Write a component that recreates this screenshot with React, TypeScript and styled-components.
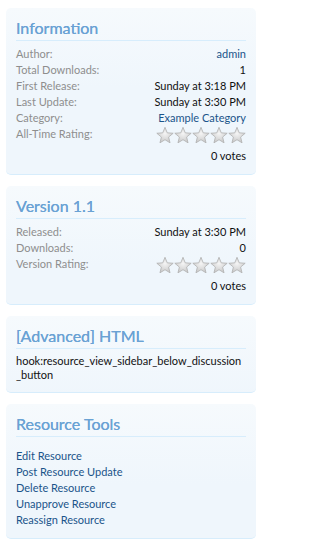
import React from "react";
import styled, { createGlobalStyle } from "styled-components";

const GlobalStyle = createGlobalStyle`
  body {
    margin: 0;
    background: #fff;
    font-family: Lato, "Open Sans", sans-serif;
    font-size: 11px;
    -webkit-font-smoothing: antialiased;
  }
`;

const Sidebar = styled.div`
  width: 250px;
  padding: 8px 0 0 6px;
  display: flex;
  flex-direction: column;
  gap: 11px;
`;

const Panel = styled.div`
  background: linear-gradient(to bottom, #f6fafd 0px, #eff6fc 80px);
  border-bottom: 1px solid #d7edfc;
  border-radius: 5px;
  padding: 10px;
`;

const Heading = styled.h3`
  margin: 0 0 5px;
  padding-bottom: 2px;
  border-bottom: 1px solid #d7edfc;
  font-size: 16px;
  line-height: 20px;
  font-weight: normal;
  color: #6aa2d4;
  text-shadow: 0 0 0.3px #6aa2d4;
`;

const Pairs = styled.dl`
  margin: 0;
`;

const Pair = styled.div<{ $tall?: boolean }>`
  display: flex;
  justify-content: space-between;
  align-items: flex-start;
  height: ${(p) => (p.$tall ? 22 : 16)}px;
  line-height: 16px;
`;

const Label = styled.dt`
  color: #8e8e8e;
`;

const Value = styled.dd<{ $link?: boolean }>`
  margin: 0;
  color: ${(p) => (p.$link ? "#1a548a" : "#111")};
  text-align: right;
`;

const Votes = styled.div`
  text-align: right;
  line-height: 16px;
  color: #111;
`;

const Stars = styled.div`
  display: flex;
  margin-top: 1px;
`;

const Hook = styled.div`
  line-height: 14px;
  color: #111;
`;

const ToolList = styled.ul`
  list-style: none;
  margin: 11px 0 0;
  padding: 0;
`;

const ToolLink = styled.li`
  line-height: 16px;
  color: #1a548a;
`;

const starPoints = Array.from({ length: 10 }, (_, i) => {
  const a = ((-90 + i * 36) * Math.PI) / 180;
  const r = i % 2 === 0 ? 8.6 : 3.8;
  return `${(9 + r * Math.cos(a)).toFixed(2)},${(8.9 + r * Math.sin(a)).toFixed(2)}`;
}).join(" ");

const Star = () => (
  <svg width="18" height="16" viewBox="0 0 18 16">
    <defs>
      <radialGradient id="starFill" cx="50%" cy="40%" r="65%">
        <stop offset="0%" stopColor="#f5f5f5" />
        <stop offset="100%" stopColor="#c4c4c4" />
      </radialGradient>
    </defs>
    <polygon points={starPoints} fill="url(#starFill)" stroke="#b0b0b0" strokeWidth="0.8" strokeLinejoin="round" />
  </svg>
);

const Rating = ({ label }: { label: string }) => (
  <>
    <Pair $tall>
      <Label>{label}</Label>
      <Stars>
        {[0, 1, 2, 3, 4].map((i) => (
          <Star key={i} />
        ))}
      </Stars>
    </Pair>
    <Votes>0 votes</Votes>
  </>
);

const tools = [
  "Edit Resource",
  "Post Resource Update",
  "Delete Resource",
  "Unapprove Resource",
  "Reassign Resource",
];

function App() {
  return (
    <Sidebar>
      <GlobalStyle />
      <Panel>
        <Heading>Information</Heading>
        <Pairs>
          <Pair>
            <Label>Author:</Label>
            <Value $link>admin</Value>
          </Pair>
          <Pair>
            <Label>Total Downloads:</Label>
            <Value>1</Value>
          </Pair>
          <Pair>
            <Label>First Release:</Label>
            <Value>Sunday at 3:18 PM</Value>
          </Pair>
          <Pair>
            <Label>Last Update:</Label>
            <Value>Sunday at 3:30 PM</Value>
          </Pair>
          <Pair>
            <Label>Category:</Label>
            <Value $link>Example Category</Value>
          </Pair>
          <Rating label="All-Time Rating:" />
        </Pairs>
      </Panel>
      <Panel>
        <Heading>Version 1.1</Heading>
        <Pairs>
          <Pair>
            <Label>Released:</Label>
            <Value>Sunday at 3:30 PM</Value>
          </Pair>
          <Pair>
            <Label>Downloads:</Label>
            <Value>0</Value>
          </Pair>
          <Rating label="Version Rating:" />
        </Pairs>
      </Panel>
      <Panel>
        <Heading>[Advanced] HTML</Heading>
        <Hook>
          hook:resource_view_sidebar_below_discussion<wbr />_button
        </Hook>
      </Panel>
      <Panel>
        <Heading>Resource Tools</Heading>
        <ToolList>
          {tools.map((t) => (
            <ToolLink key={t}>{t}</ToolLink>
          ))}
        </ToolList>
      </Panel>
    </Sidebar>
  );
}

export default App;
